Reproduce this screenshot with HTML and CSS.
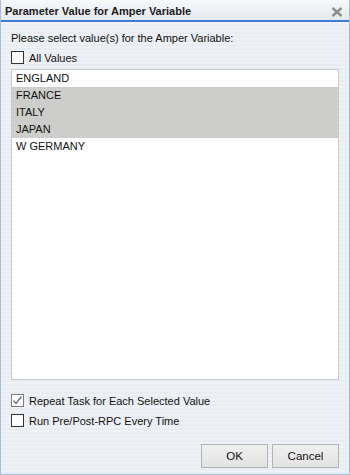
FILE: index.html
```html
<!DOCTYPE html>
<html lang="en">
<head>
    <meta charset="UTF-8">
    <title>Parameter Value for Amper Variable</title>
    <link rel="stylesheet" href="styles.css">
</head>
<body>
    <!-- dialog window -->
    <div class="dialog">
        <div class="titlebar">
            <span class="title">Parameter Value for Amper Variable</span>
            <svg class="close" width="12" height="10" viewBox="0 0 12 10">
                <path d="M1.5 1 L10.5 9 M10.5 1 L1.5 9" stroke="#8c8c8c" stroke-width="2.4"/>
            </svg>
        </div>

        <div class="content">
            <div class="prompt">Please select value(s) for the Amper Variable:</div>

            <label class="check top-check">
                <span class="box"></span>
                <span>All Values</span>
            </label>

            <!-- value list -->
            <ul class="list">
                <li>ENGLAND</li>
                <li class="selected">FRANCE</li>
                <li class="selected">ITALY</li>
                <li class="selected">JAPAN</li>
                <li>W GERMANY</li>
            </ul>

            <div class="options">
                <label class="check">
                    <span class="box checked">
                        <svg width="11" height="11" viewBox="0 0 11 11">
                            <path d="M1.5 5.5 L4 8.5 L9.5 1.5" fill="none" stroke="#6d6d6d" stroke-width="1.3"/>
                        </svg>
                    </span>
                    <span>Repeat Task for Each Selected Value</span>
                </label>
                <label class="check">
                    <span class="box"></span>
                    <span>Run Pre/Post-RPC Every Time</span>
                </label>
            </div>

            <div class="buttons">
                <button class="btn">OK</button>
                <button class="btn">Cancel</button>
            </div>
        </div>
    </div>
</body>
</html>
```

FILE: styles.css
```css
body {
    margin: 0;
    font-family: "Liberation Sans", Arial, sans-serif;
    font-size: 11px;
    color: #111;
}

/* whole window */
.dialog {
    width: 350px;
    height: 475px;
    box-sizing: border-box;
    border: 1px solid #a9c0dc;
    border-top: none;
    display: flex;
    flex-direction: column;
    background: repeating-linear-gradient(#e9edf2 0 2px, #eef1f5 2px 4px);
}

.titlebar {
    height: 22px;
    box-sizing: border-box;
    border-bottom: 2px solid #3f7bd3;
    background: linear-gradient(#f7f9fb, #e4e9ef);
    display: flex;
    align-items: center;
    justify-content: space-between;
    padding: 1px 6px 0 4px;
}

.title {
    font-weight: bold;
    font-size: 11px;
    color: #1b1b1b;
}

.close {
    margin-top: 3px;
}

.content {
    flex: 1;
    display: flex;
    flex-direction: column;
    padding: 9px 10px 6px 10px;
}

.prompt {
    line-height: 14px;
}

.check {
    display: flex;
    align-items: center;
    gap: 5px;
    height: 13px;
}

.top-check {
    margin-top: 6px;
}

.box {
    width: 11px;
    height: 11px;
    border: 1px solid #333;
    background: #fff;
    display: flex;
    align-items: center;
    justify-content: center;
}

.box.checked {
    border-color: #7a7a7a;
}

.list {
    list-style: none;
    margin: 5px 0 0 0;
    padding: 0;
    height: 311px;
    box-sizing: border-box;
    border: 1px solid #c9c9c9;
    background: #fff;
}

.list li {
    height: 17px;
    line-height: 17px;
    padding-left: 4px;
}

.list li.selected {
    background: #cdcecb;
}

.options {
    display: flex;
    flex-direction: column;
    gap: 7px;
    margin-top: 14px;
}

.buttons {
    display: flex;
    justify-content: flex-end;
    gap: 4px;
    margin-top: 17px;
}

.btn {
    width: 67px;
    height: 24px;
    font-family: "Liberation Sans", Arial, sans-serif;
    font-size: 11.5px;
    color: #111;
    border: 1px solid #b3b3b3;
    background: linear-gradient(#f0f0f0, #e3e3e3);
}
```
